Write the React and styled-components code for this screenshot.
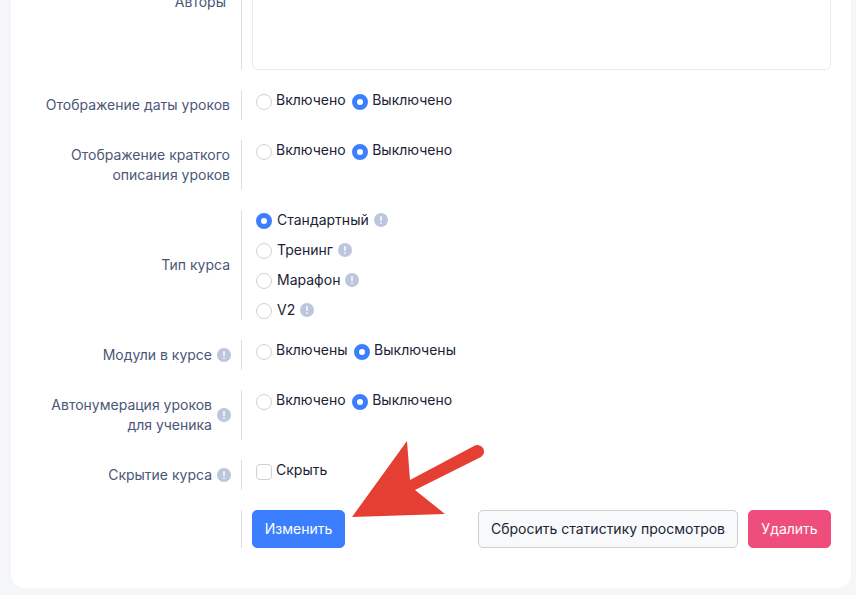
import React from 'react';
import styled, { createGlobalStyle } from 'styled-components';

const Global = createGlobalStyle`
  html, body { margin: 0; padding: 0; height: 100%; overflow: hidden; background: #f5f6f7; }
  body { font-family: Inter, "Liberation Sans", sans-serif; font-size: 14px; line-height: 20px; }
`;

const Page = styled.div`
  position: relative;
  height: 595px;
  overflow: hidden;
  padding: 0 5px 0 11px;
`;

const Card = styled.main`
  display: flex;
  flex-direction: column;
  gap: 20px;
  margin-top: -66px;
  padding: 0 20px 40px;
  background: #fff;
  border-radius: 0 0 14px 14px;
  box-sizing: border-box;
  width: 840px;
`;

const Row = styled.div`
  display: grid;
  grid-template-columns: 211px 1fr;
`;

const Label = styled.div`
  display: flex;
  align-items: center;
  justify-content: flex-end;
  gap: 5px;
  padding: 5px ${p => p.$right ?? 11}px 5px 0;
  border-right: 1px solid #dcdfe4;
  color: #4c5678;
  text-align: right;
`;

const Value = styled.div`
  padding-left: 10px;
  min-width: 0;
`;

const AuthorsBox = styled.div`
  height: 134px;
  border: 1px solid #e9ecef;
  border-radius: 5px;
  background: #fff;
`;

const Inline = styled.div`
  display: flex;
  padding-left: 4px;
  gap: 6.5px;
`;

const Stack = styled.div`
  display: flex;
  flex-direction: column;
  gap: 10px;
  padding-left: 4px;
`;

const Option = styled.label`
  display: flex;
  color: #1b2336;
`;

const Radio = styled.span`
  flex: none;
  box-sizing: border-box;
  width: 16px;
  height: 16px;
  margin: ${p => (p.$tall ? '3px' : '4px')} 4px 0 0;
  border-radius: 50%;
  border: ${p => (p.$on ? '5px solid #3b7ffe' : '1px solid #ced1d6')};
  background: #fff;
`;

const Check = styled.span`
  flex: none;
  box-sizing: border-box;
  width: 16px;
  height: 16px;
  margin: 4px 4px 0 0;
  border-radius: 4px;
  border: 1px solid #ced1d6;
  background: #fff;
`;

const InfoWrap = styled.svg`
  flex: none;
  width: 14px;
  height: 14px;
  display: block;
`;

const StackText = styled.span`
  margin-left: 1px;
`;

const StackInfo = styled.span`
  margin: 3px 0 0 5px;
`;

const Actions = styled.div`
  display: flex;
  justify-content: space-between;
`;

const RightActions = styled.div`
  display: flex;
  gap: 10px;
`;

const Button = styled.button`
  box-sizing: border-box;
  width: ${p => p.$width}px;
  height: 38px;
  padding: 0;
  border-radius: 5px;
  border: 1px solid ${p => p.$border};
  background: ${p => p.$bg};
  color: ${p => p.$color};
  font: 400 14px/20px Inter, "Liberation Sans", sans-serif;
`;

const Arrow = styled.svg`
  position: absolute;
  left: 340px;
  top: 430px;
  width: 160px;
  height: 100px;
`;

const Info = () => (
  <InfoWrap viewBox="0 0 14 14">
    <circle cx="7" cy="7" r="7" fill="#bcc6dd" />
    <rect x="6" y="3" width="2" height="5" rx="0.7" fill="#eef1f7" />
    <rect x="6" y="9.2" width="2" height="1.8" rx="0.7" fill="#eef1f7" />
  </InfoWrap>
);

const OnOff = ({ on = 'Включено', off = 'Выключено' }) => (
  <Inline>
    <Option><Radio />{on}</Option>
    <Option><Radio $on />{off}</Option>
  </Inline>
);

const types = [
  ['Стандартный', true],
  ['Тренинг', false],
  ['Марафон', false],
  ['V2', false],
];

export default function App() {
  return (
    <>
      <Global />
      <Page>
        <Card>
          <Row>
            <Label $right={15}>Авторы</Label>
            <Value><AuthorsBox /></Value>
          </Row>
          <Row>
            <Label>Отображение даты уроков</Label>
            <Value><OnOff /></Value>
          </Row>
          <Row>
            <Label>Отображение краткого описания уроков</Label>
            <Value><OnOff /></Value>
          </Row>
          <Row>
            <Label>Тип курса</Label>
            <Value>
              <Stack>
                {types.map(([name, on]) => (
                  <Option key={name}>
                    <Radio $tall $on={on} />
                    <StackText>{name}</StackText>
                    <StackInfo><Info /></StackInfo>
                  </Option>
                ))}
              </Stack>
            </Value>
          </Row>
          <Row>
            <Label $right={10}>Модули в курсе <Info /></Label>
            <Value><OnOff on="Включены" off="Выключены" /></Value>
          </Row>
          <Row>
            <Label $right={10}><span>Автонумерация уроков для ученика</span> <Info /></Label>
            <Value><OnOff /></Value>
          </Row>
          <Row>
            <Label $right={10}>Скрытие курса <Info /></Label>
            <Value>
              <Inline><Option><Check />Скрыть</Option></Inline>
            </Value>
          </Row>
          <Row>
            <Label />
            <Value>
              <Actions>
                <Button $width={93} $bg="#3b7ffe" $border="#3b7ffe" $color="#fff">Изменить</Button>
                <RightActions>
                  <Button $width={260} $bg="#f8f9fb" $border="#ced1d6" $color="#1b2336">Сбросить статистику просмотров</Button>
                  <Button $width={83} $bg="#ef4d7b" $border="#ef4d7b" $color="#fff">Удалить</Button>
                </RightActions>
              </Actions>
            </Value>
          </Row>
        </Card>
        <Arrow viewBox="340 430 160 100">
          <path d="M352 517 L407 441 L410 480 L474 446 A6.3 6.3 0 0 1 481 457 L415 490 L445 514 Z" fill="#e53e33" />
        </Arrow>
      </Page>
    </>
  );
}
